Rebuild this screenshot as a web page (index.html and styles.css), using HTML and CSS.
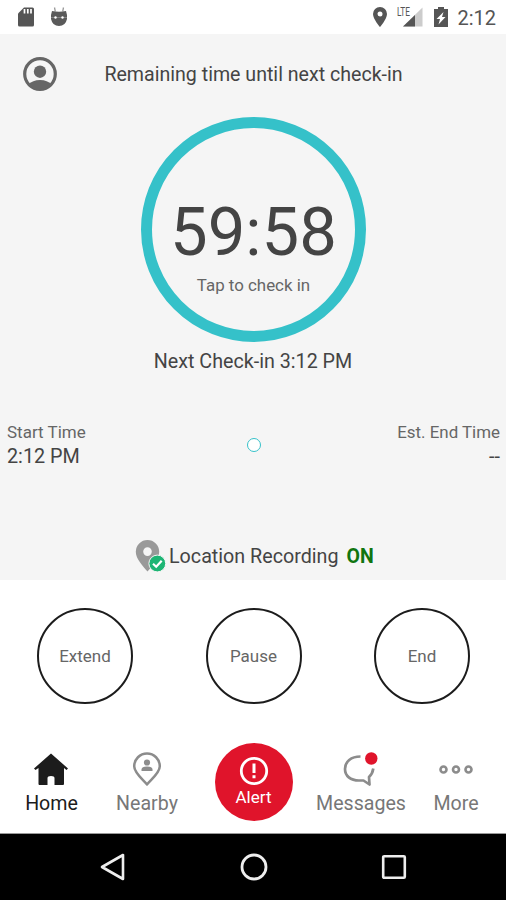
FILE: index.html
```html
<!doctype html>
<html lang="en">
  <head>
    <meta charset="UTF-8" />
    <meta name="viewport" content="width=device-width, initial-scale=1.0" />
    <title>Check-in</title>
    <link rel="stylesheet" href="styles.css">
  </head>
  <body>
    <div class="statusbar">
      <svg class="sd" width="16" height="20" viewBox="0 0 16 20">
        <path fill="#555" d="M6 0.500h8.500q1.500 0 1.500 1.500v16q0 1.500-1.500 1.500h-13q-1.500 0-1.500-1.500V6.500z" />
        <path stroke="#fff" stroke-width="1.700" d="M6.500 2v4.500M9.800 2v4.500M13 2v4.500" />
      </svg>
      <svg class="droid" width="18" height="20" viewBox="0 0 18 20">
        <path fill="none" stroke="#999" stroke-width="1.300" d="M4.500 0.500l0.800 4M13.500 0.500l-0.800 4" />
        <path fill="#5a5a5a" d="M2 4q7 1.500 14 0l1 4v4q-1.500 7-8 7t-8-7V8z" />
        <path stroke="#888" stroke-width="0.900" d="M1 10.500h16" />
        <circle cx="5.500" cy="10.500" r="1.200" fill="#fff" />
        <circle cx="12.500" cy="10.500" r="1.200" fill="#fff" />
      </svg>
      <div class="status-right">
        <svg class="pin" width="14" height="20" viewBox="0 0 14 20">
          <path fill="#555" fill-rule="evenodd" d="M7 0a7 7 0 0 0-7 7c0 5 7 13 7 13s7-8 7-13a7 7 0 0 0-7-7zm0 4.500a2.500 2.500 0 1 1 0 5 2.500 2.500 0 0 1 0-5z" />
        </svg>
        <svg class="signal" width="27" height="22" viewBox="0 -2 27 22">
          <path fill="#ccc" d="M25.500 0.500v19H6z" />
          <path fill="#555" d="M18 8v11.500H6z" />
          <text class="lte" x="0" y="8.500" textLength="13" lengthAdjust="spacingAndGlyphs">LTE</text>
        </svg>
        <svg class="battery" width="14" height="20" viewBox="0 0 14 20">
          <path fill="#555" d="M4 0h6v2h4v18H0V2h4z" />
          <path fill="#fff" d="M9.500 5L2.500 12h3.500l-1.500 5.500 7-7.500H8z" />
        </svg>
        <span class="clock">2:12</span>
      </div>
    </div>

    <div class="panel">
      <div class="header">
        <svg width="34" height="34" viewBox="0 0 34 34">
          <circle cx="17" cy="17" r="15.300" fill="none" stroke="#666" stroke-width="3.200" />
          <circle cx="17" cy="14.700" r="6.200" fill="#666" />
          <path fill="#666" d="M5.500 27.500Q9.500 23 17 23t11.500 4.500Q24 33 17 33T5.500 27.500z" />
        </svg>
        <span class="title">Remaining time until next check-in</span>
      </div>

      <div class="timer">
        <div class="time">59:58</div>
        <div class="tap">Tap to check in</div>
      </div>
      <div class="next">Next Check-in 3:12 PM</div>

      <div class="times">
        <div>
          <div class="time-label">Start Time</div>
          <div class="time-value">2:12 PM</div>
        </div>
        <div class="dot"></div>
        <div class="end">
          <div class="time-label">Est. End Time</div>
          <div class="time-value">--</div>
        </div>
      </div>

      <div class="location">
        <svg width="32" height="34" viewBox="0 0 32 34">
          <path fill="#999" fill-rule="evenodd" d="M12.500 1A11.700 11.700 0 0 0 0.800 12.700C0.800 20 8 27 12.500 32.500 17 27 24.200 20 24.200 12.700A11.700 11.700 0 0 0 12.500 1zm0 7.300a4.300 4.300 0 1 1 0 8.600 4.300 4.300 0 0 1 0-8.600z" />
          <circle cx="22.300" cy="24.500" r="8.400" fill="#1db574" stroke="#f5f5f5" stroke-width="1" />
          <path fill="none" stroke="#fff" stroke-width="2.200" d="M18 24.700l3.200 3 5.500-6" />
        </svg>
        <span class="rec">Location Recording</span>
        <span class="on">ON</span>
      </div>
    </div>

    <div class="actions">
      <div class="round">Extend</div>
      <div class="round">Pause</div>
      <div class="round">End</div>
    </div>

    <div class="tabs">
      <div class="tab active">
        <svg width="36" height="34" viewBox="0 0 36 34">
          <path fill="#1c1c1c" d="M18 1.500L35 16.500 33.500 18 31 16v16q0 1-1 1h-8.500v-7q0-2-3.500-2t-3.500 2v7H6.500q-1 0-1-1V16l-3 2L1 16.500z" />
        </svg>
        <span>Home</span>
      </div>
      <div class="tab">
        <svg width="30" height="34" viewBox="0 0 30 34">
          <path fill="none" stroke="#8c8c8c" stroke-width="2.500" stroke-linejoin="round" d="M15 1.500A12.800 12.800 0 0 0 2.200 14.300C2.200 21 11 27.500 15 32.500 19 27.500 27.800 21 27.800 14.300A12.800 12.800 0 0 0 15 1.500z" />
          <circle cx="15" cy="10.500" r="3.100" fill="#8c8c8c" />
          <path fill="#8c8c8c" d="M9.500 19v-1.500q0-3 5.500-3t5.500 3V19z" />
        </svg>
        <span>Nearby</span>
      </div>
      <div class="alert">
        <svg width="30" height="30" viewBox="0 0 30 30">
          <circle cx="15" cy="15" r="12.700" fill="none" stroke="#fff" stroke-width="2.800" />
          <path stroke="#fff" stroke-width="3" d="M15 7.500v9.500M15 19.300v3" />
        </svg>
        <span>Alert</span>
      </div>
      <div class="tab">
        <svg width="36" height="36" viewBox="0 0 36 36">
          <path fill="none" stroke="#8c8c8c" stroke-width="2.700" stroke-linejoin="round" d="M17.500 4.500C8 4.500 2 9.500 2 17c0 7 5.500 11.500 14 11.500h4.500l6 4-0.500-7.500q3.500-3 4.300-8.500" />
          <circle cx="28.300" cy="6.500" r="6.200" fill="#e0142b" />
        </svg>
        <span>Messages</span>
      </div>
      <div class="tab">
        <svg width="36" height="34" viewBox="0 0 36 34">
          <g fill="none" stroke="#8c8c8c" stroke-width="2.600">
            <circle cx="5.500" cy="17.500" r="3" />
            <circle cx="18" cy="17.500" r="3" />
            <circle cx="30.500" cy="17.500" r="3" />
          </g>
        </svg>
        <span>More</span>
      </div>
    </div>

    <div class="sysbar">
      <svg width="28" height="28" viewBox="0 0 28 28">
        <path fill="none" stroke="#eee" stroke-width="2.600" stroke-linejoin="round" d="M24 2v24L3 14z" />
      </svg>
      <svg width="28" height="28" viewBox="0 0 28 28">
        <circle cx="14" cy="14" r="12" fill="none" stroke="#eee" stroke-width="2.800" />
      </svg>
      <svg width="28" height="28" viewBox="0 0 28 28">
        <rect x="3.200" y="3.200" width="21.600" height="21.600" rx="1" fill="none" stroke="#eee" stroke-width="2.600" />
      </svg>
    </div>
  </body>
</html>
```

FILE: styles.css
```css
* {
  box-sizing: border-box;
}
body {
  margin: 0;
  height: 900px;
  display: flex;
  flex-direction: column;
  background-color: #ffffff;
  font-family: Roboto, "Liberation Sans", sans-serif;
  color: #444;
  white-space: nowrap;
  overflow: hidden;
}
svg {
  display: block;
  flex: none;
}

/* status bar */
.statusbar {
  height: 34px;
  display: flex;
  align-items: center;
  padding: 0 10px 0 18px;
}
.droid {
  margin-left: 16px;
}
.status-right {
  margin-left: auto;
  display: flex;
  align-items: center;
}
.signal {
  margin: 0 0 2px 10px;
  overflow: visible;
}
.lte {
  font-size: 12px;
  fill: #555;
}
.battery {
  margin-left: 10px;
}
.clock {
  margin: 2px 0 0 9px;
  font-size: 20px;
  line-height: 24px;
  color: #555;
}

/* timer panel */
.panel {
  height: 546px;
  background-color: #f5f5f5;
  display: flex;
  flex-direction: column;
}
.header {
  height: 80px;
  padding: 0 22px 0 23px;
  display: grid;
  grid-template-columns: 34px 1fr 34px;
  align-items: center;
}
.title {
  font-size: 19.6px;
  text-align: center;
}
.timer {
  width: 225px;
  height: 225px;
  margin: 3px auto 0 141px;
  border: 11px solid #35c1c9;
  border-radius: 50%;
  text-align: center;
}
.time {
  margin-top: 65px;
  font-size: 67px;
  line-height: 78px;
}
.tap {
  margin-top: 4px;
  font-size: 16.9px;
  line-height: 20px;
  color: #666;
}
.next {
  margin-top: 8px;
  font-size: 19.7px;
  line-height: 24px;
  text-align: center;
}
.times {
  margin-top: 47px;
  padding: 0 6px 0 7px;
  display: grid;
  grid-template-columns: 1fr 14px 1fr;
  align-items: start;
}
.time-label {
  font-size: 17px;
  line-height: 22px;
  color: #666;
}
.time-value {
  font-size: 19.8px;
  line-height: 28px;
}
.dot {
  width: 14px;
  height: 14px;
  margin-top: 17px;
  border: 1.5px solid #35c1c9;
  border-radius: 50%;
  background-color: #fff;
}
.end {
  text-align: right;
}
.end .time-label {
  font-size: 16.9px;
}
.location {
  margin-top: auto;
  height: 48px;
  padding-left: 135px;
  display: flex;
  align-items: center;
}
.rec {
  margin-left: 2px;
  font-size: 19.7px;
}
.on {
  margin-left: 8px;
  font-size: 19.5px;
  font-weight: bold;
  color: #107510;
}

/* round buttons */
.actions {
  height: 152px;
  padding: 0 36px 0 37px;
  display: flex;
  align-items: center;
  justify-content: space-between;
}
.round {
  width: 96px;
  height: 96px;
  border: 2px solid #1c1c1c;
  border-radius: 50%;
  font-size: 17px;
  line-height: 93px;
  text-align: center;
  color: #666;
}

/* bottom tabs */
.tabs {
  height: 101px;
  display: grid;
  grid-template-columns: 103px 88px 125px 90px 100px;
  justify-items: center;
  align-items: start;
}
.tab {
  height: 89px;
  padding-top: 20px;
  display: flex;
  flex-direction: column;
  align-items: center;
  justify-content: space-between;
  padding-bottom: 5px;
  font-size: 19.6px;
  line-height: 24px;
  color: #777;
}
.active {
  color: #1c1c1c;
}
.alert {
  width: 78px;
  height: 78px;
  margin-top: 11px;
  padding-top: 13px;
  border-radius: 50%;
  background-color: #e0142b;
  color: #fff;
  font-size: 17px;
  line-height: 22px;
  display: flex;
  flex-direction: column;
  align-items: center;
}

/* system navigation */
.sysbar {
  flex: 1;
  padding: 0 98px 0 99px;
  display: flex;
  align-items: center;
  justify-content: space-between;
  background-color: #000;
  border-top: 1px solid #999;
}
```
